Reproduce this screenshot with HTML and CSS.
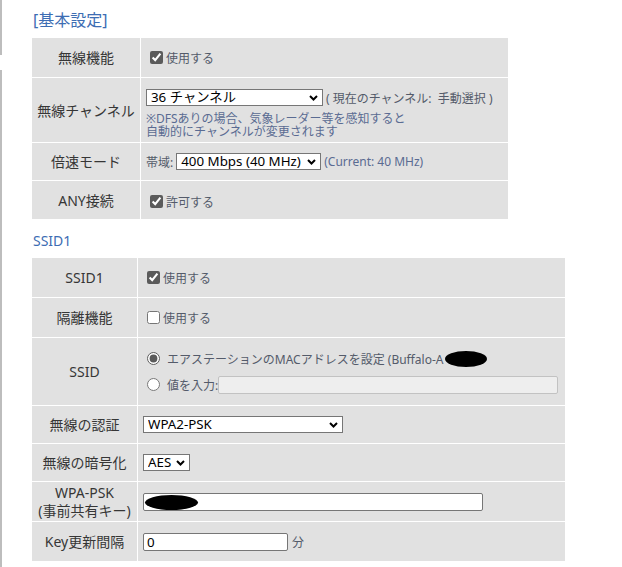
FILE: index.html
```html
<!DOCTYPE html>
<html lang="ja">
<head>
<meta charset="utf-8">
<title>基本設定</title>
<link rel="stylesheet" href="styles.css">
</head>
<body>
<div class="page">
  <h2 class="sec-title">[基本設定]</h2>
  <div class="form-grid basic">
    <div class="lbl">無線機能</div>
    <div class="val"><label class="chk"><input type="checkbox" checked>使用する</label></div>

    <div class="lbl">無線チャンネル</div>
    <div class="val col ch-cell">
      <div class="line">
        <span class="sel-wrap"><select class="sel sel-ch"><option>36 チャンネル</option></select><svg class="chev" width="9" height="6" viewBox="0 0 9 6"><polyline points="1,1 4.5,4.5 8,1" fill="none" stroke="#000" stroke-width="2"/></svg></span>
        <span class="info">( 現在のチャンネル:&nbsp; 手動選択 )</span>
      </div>
      <p class="note">※DFSありの場合、気象レーダー等を感知すると<br>自動的にチャンネルが変更されます</p>
    </div>

    <div class="lbl">倍速モード</div>
    <div class="val">
      <span class="pre">帯域:</span>
      <span class="sel-wrap"><select class="sel sel-bw"><option>400 Mbps (40 MHz)</option></select><svg class="chev" width="9" height="6" viewBox="0 0 9 6"><polyline points="1,1 4.5,4.5 8,1" fill="none" stroke="#000" stroke-width="2"/></svg></span>
      <span class="cur">(Current: 40 MHz)</span>
    </div>

    <div class="lbl">ANY接続</div>
    <div class="val"><label class="chk low"><input type="checkbox" checked>許可する</label></div>
  </div>

  <h2 class="sec-title sub">SSID1</h2>
  <div class="form-grid ssid">
    <div class="lbl">SSID1</div>
    <div class="val"><label class="chk"><input type="checkbox" checked>使用する</label></div>

    <div class="lbl">隔離機能</div>
    <div class="val"><label class="chk"><input type="checkbox">使用する</label></div>

    <div class="lbl">SSID</div>
    <div class="val col">
      <label class="radio-line"><input type="radio" name="ssid" checked>エアステーションのMACアドレスを設定 (Buffalo-A<span class="blot blot-a"></span></label>
      <label class="radio-line"><input type="radio" name="ssid">値を入力:<input type="text" class="txt txt-ssid" disabled></label>
    </div>

    <div class="lbl">無線の認証</div>
    <div class="val"><span class="sel-wrap"><select class="sel sel-auth"><option>WPA2-PSK</option></select><svg class="chev" width="9" height="6" viewBox="0 0 9 6"><polyline points="1,1 4.5,4.5 8,1" fill="none" stroke="#000" stroke-width="2"/></svg></span></div>

    <div class="lbl">無線の暗号化</div>
    <div class="val"><span class="sel-wrap"><select class="sel sel-enc"><option>AES</option></select><svg class="chev" width="9" height="6" viewBox="0 0 9 6"><polyline points="1,1 4.5,4.5 8,1" fill="none" stroke="#000" stroke-width="2"/></svg></span></div>

    <div class="lbl two">WPA-PSK<br>(事前共有キー)</div>
    <div class="val"><span class="masked"><input type="text" class="txt txt-psk"><span class="blot blot-b"></span></span></div>

    <div class="lbl">Key更新間隔</div>
    <div class="val"><input type="text" class="txt txt-key" value="0"><span class="unit">分</span></div>
  </div>
</div>
</body>
</html>
```
FILE: styles.css
```css
html, body {
  margin: 0;
  background: #ffffff;
}
body {
  font-family: "Noto Sans", "Noto Sans CJK JP", sans-serif;
}
.page {
  position: relative;
  min-height: 567px;
  box-sizing: border-box;
  border-left: 2px solid #bdbdbd;
  padding: 9px 0 0 30px;
}
.page::before {
  content: "";
  position: absolute;
  left: -2px;
  top: 55px;
  width: 4px;
  height: 15px;
  background: #ffffff;
}
.sec-title {
  margin: 0 0 7px;
  padding-left: 1px;
  font-size: 16px;
  line-height: 22px;
  font-weight: normal;
  color: #3d6db3;
}
.sec-title.sub {
  font-size: 14px;
  line-height: 20px;
  margin: 12px 0 7px;
}
.form-grid {
  display: grid;
  gap: 1px;
  background: #ffffff;
}
.basic {
  width: 476px;
  grid-template-columns: 108px 1fr;
  grid-template-rows: 39px 64px 37px 38px;
}
.ssid {
  width: 533px;
  grid-template-columns: 105px 1fr;
  grid-template-rows: 39px 39px 67px 37px 37px 39px 39px;
}
.lbl {
  background: #e1e1e1;
  display: flex;
  align-items: center;
  justify-content: center;
  text-align: center;
  font-size: 14px;
  line-height: 17px;
  color: #363636;
}
.lbl.two {
  line-height: 18px;
}
.val {
  background: #e1e1e1;
  display: flex;
  align-items: center;
  padding-left: 5px;
  font-size: 12px;
  color: #545b6a;
  min-width: 0;
}
.val.col {
  flex-direction: column;
  align-items: flex-start;
  justify-content: center;
}
.val.ch-cell {
  justify-content: flex-start;
  padding-top: 11px;
}
.line {
  display: flex;
  align-items: center;
  height: 17px;
}
.info {
  margin-left: 3px;
}
.note {
  margin: 6px 0 0;
  font-size: 12px;
  line-height: 13px;
  color: #5a6b92;
}
.pre {
  margin-right: 3px;
}
.cur {
  margin-left: 3px;
  color: #5a6b92;
}
.chk {
  display: inline-flex;
  align-items: center;
}
.chk input {
  width: 13px;
  height: 13px;
  margin: 0 3px 0 4px;
  accent-color: #5b5b5b;
}
.chk.low {
  margin-top: 3px;
}
.radio-line {
  display: flex;
  align-items: center;
  height: 26px;
  white-space: nowrap;
}
.radio-line input[type="radio"] {
  width: 13px;
  height: 13px;
  margin: 0 7px 0 4px;
  accent-color: #5b5b5b;
}
.blot {
  display: inline-block;
  background: #000000;
  border-radius: 50%;
}
.blot-a {
  width: 42px;
  height: 16px;
  margin-left: 2px;
}
.sel-wrap {
  position: relative;
  display: inline-flex;
  height: 17px;
}
.sel {
  -webkit-appearance: none;
  appearance: none;
  box-sizing: border-box;
  height: 17px;
  font-family: "Noto Sans", "Noto Sans CJK JP", sans-serif;
  font-size: 13.333px;
  line-height: 15px;
  color: #000000;
  background: #ffffff;
  border: 1px solid #767676;
  border-radius: 0;
  padding: 0 16px 0 4px;
  margin: 0;
}
.chev {
  position: absolute;
  right: 5px;
  top: 6px;
  pointer-events: none;
}
.sel-ch { width: 177px; }
.sel-bw { width: 145px; }
.sel-auth { width: 200px; }
.sel-enc { width: 47px; }
.txt {
  box-sizing: border-box;
  height: 18px;
  margin: 0;
  padding: 0 3px;
  border: 1px solid #767676;
  border-radius: 2px;
  background: #ffffff;
  font-family: "Noto Sans", "Noto Sans CJK JP", sans-serif;
  font-size: 13.333px;
  color: #000000;
}
.txt-ssid {
  width: 340px;
  background: #eeeeee;
  border-color: #c2c2c2;
}
.masked {
  position: relative;
  display: inline-block;
  height: 18px;
}
.txt-psk { width: 340px; }
.blot-b {
  position: absolute;
  left: 2px;
  top: 2px;
  width: 53px;
  height: 15px;
}
.txt-key { width: 145px; }
.unit {
  margin-left: 4px;
}
```
